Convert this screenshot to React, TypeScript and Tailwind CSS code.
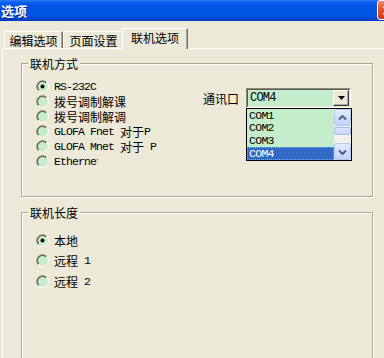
import React from "react";

const CJK = /([\u3400-\u9fff\uff00-\uffef]+)/;

function Mixed({ text }: { text: string }) {
  const parts = text.split(CJK).filter((p) => p.length > 0);
  return (
    <>
      {parts.map((p, i) =>
        CJK.test(p) ? (
          <span key={i} className="inline-block align-top leading-[15px] font-['Noto_Sans_CJK_SC',sans-serif] text-[12px]">
            {p}
          </span>
        ) : (
          <span
            key={i}
            className="inline-block align-top leading-[15px] font-['Liberation_Mono','Noto_Sans_CJK_SC',monospace] text-[11.5px] tracking-[-0.9px] whitespace-pre"
          >
            {p}
          </span>
        )
      )}
    </>
  );
}

function Radio({ checked }: { checked?: boolean }) {
  return (
    <svg width="13" height="13" viewBox="0 0 13 13" className="shrink-0">
      <circle cx="6.5" cy="6.5" r="5.5" fill="#C4EDCB" />
      <path d="M2.26 10.74 A6 6 0 0 1 10.74 2.26" fill="none" stroke="#8A8878" strokeWidth="1" />
      <path d="M10.74 2.26 A6 6 0 0 1 2.26 10.74" fill="none" stroke="#FFFFFF" strokeWidth="1" />
      <path d="M2.96 10.04 A5 5 0 0 1 10.04 2.96" fill="none" stroke="#4A4A40" strokeWidth="1" />
      <path d="M10.04 2.96 A5 5 0 0 1 2.96 10.04" fill="none" stroke="#E6E3D4" strokeWidth="1" />
      {checked && <circle cx="6.5" cy="6.5" r="2" fill="#000" />}
    </svg>
  );
}

function RadioRow({ label, checked, h, clip }: { label: string; checked?: boolean; h: string; clip?: boolean }) {
  return (
    <div className={`flex items-center gap-[5px] ${h}`}>
      <Radio checked={checked} />
      {clip ? (
        <div className="w-[44px] h-[15px] overflow-hidden whitespace-nowrap leading-[15px] text-black">
          <Mixed text={label} />
        </div>
      ) : (
        <div className="h-[15px] whitespace-nowrap leading-[15px] text-black">
          <Mixed text={label} />
        </div>
      )}
    </div>
  );
}

function GroupBox({ title, className, children }: { title: string; className: string; children?: React.ReactNode }) {
  return (
    <div
      className={`relative w-[352px] border border-[#ACA899] shadow-[1px_1px_0_#ffffff,inset_1px_1px_0_#ffffff] ${className}`}
    >
      <div className="absolute -top-[8px] left-[6px] px-[2px] h-[15px] bg-[#ECE9D8] leading-[15px] text-black font-['Noto_Sans_CJK_SC',sans-serif] text-[12px]">
        {title}
      </div>
      {children}
    </div>
  );
}

function Chevron({ up }: { up?: boolean }) {
  return (
    <svg width="9" height="6" viewBox="0 0 9 6">
      <path
        d={up ? "M1 4.5 L4.5 1 L8 4.5" : "M1 1.5 L4.5 5 L8 1.5"}
        fill="none"
        stroke="#4D6185"
        strokeWidth="2"
      />
    </svg>
  );
}

export default function App() {
  return (
    <div className="w-[384px] h-[358px] overflow-hidden bg-[#ECE9D8] flex flex-col select-none">
      {/* Title bar */}
      <div className="h-[21px] shrink-0 flex items-center overflow-hidden bg-[linear-gradient(to_bottom,#2E7CF8_0%,#0A5EEE_12%,#0055E5_30%,#0053E2_75%,#0049D6_88%,#0036B8_100%)]">
        <div className="pl-[1px] text-white font-bold text-[13px] leading-[16px] font-['Noto_Sans_CJK_SC',sans-serif] [text-shadow:1px_1px_0_#0A2A8A]">
          选项
        </div>
        <div className="ml-auto mr-[-14px] w-[21px] h-[20px] mt-[-1px] rounded-[3px] border border-white bg-[linear-gradient(to_bottom,#F08A68,#E0502A_50%,#C83C18)] flex items-center justify-center">
          <svg width="11" height="11" viewBox="0 0 11 11">
            <path d="M1.5 1.5 L9.5 9.5 M9.5 1.5 L1.5 9.5" stroke="#fff" strokeWidth="2" />
          </svg>
        </div>
      </div>

      {/* Tab strip */}
      <div className="h-[27px] shrink-0 flex items-end pl-[4px] font-['Noto_Sans_CJK_SC',sans-serif] text-[12px] text-black">
        <div className="w-[59px] h-[17px] border-l border-t border-white rounded-tl-[2px] border-r border-r-[#716F64] shadow-[inset_-1px_0_0_#ACA899] flex items-center justify-center pt-[1px] leading-[15px]">
          编辑选项
        </div>
        <div className="w-[61px] h-[17px] border-l border-t border-white rounded-tl-[2px] border-r border-r-[#716F64] shadow-[inset_-1px_0_0_#ACA899] flex items-center justify-center pt-[1px] leading-[15px]">
          页面设置
        </div>
        <div className="relative z-10 ml-[-2px] mb-[-1px] w-[66px] h-[21px] bg-[#ECE9D8] border-l border-t border-white rounded-tl-[2px] border-r border-r-[#716F64] shadow-[inset_-1px_0_0_#ACA899] flex items-start justify-center pt-[1px] leading-[15px]">
          联机选项
        </div>
      </div>

      {/* Panel */}
      <div className="flex-1 ml-[2px] border-l border-t border-white pl-[18px] pt-[14px]">
        <GroupBox title="联机方式" className="h-[134px]">
          <div className="flex pt-[15px]">
            <div className="w-[181px] pl-[14px] flex flex-col">
              <RadioRow h="h-[15px]" label="RS-232C" checked />
              <RadioRow h="h-[15px]" label="拨号调制解课" />
              <RadioRow h="h-[15px]" label="拨号调制解调" />
              <RadioRow h="h-[15px]" label="GLOFA Fnet 对于P" />
              <RadioRow h="h-[15px]" label="GLOFA Mnet 对于 P" />
              <RadioRow h="h-[15px]" label="Ethernet" clip />
            </div>
            <div className="mt-[9px] flex items-center gap-[7px] h-[20px]">
              <div className="font-['Noto_Sans_CJK_SC',sans-serif] text-[12px] leading-[15px] text-black">通讯口</div>
              <div className="relative w-[105px] h-[20px] border border-t-[#8C8A7C] border-l-[#8C8A7C] border-b-white border-r-white">
                <div className="h-full border border-t-[#5A594E] border-l-[#5A594E] border-b-[#E4E1D2] border-r-[#E4E1D2] bg-[#C4EDCB] flex items-center">
                  <div className="pl-[2px] flex-1 font-['Liberation_Mono',monospace] text-[12px] tracking-[-0.8px] leading-[14px] text-black">
                    COM4
                  </div>
                  <div className="w-[16px] h-[16px] bg-[#ECE9D8] border border-t-white border-l-white border-b-[#404040] border-r-[#404040] shadow-[inset_-1px_-1px_0_#ACA899] flex items-center justify-center">
                    <svg width="7" height="4" viewBox="0 0 7 4">
                      <path d="M0 0 H7 L3.5 4 Z" fill="#000" />
                    </svg>
                  </div>
                </div>

                {/* Dropdown list */}
                <div className="absolute left-[-1px] top-[19px] w-[106px] h-[53px] border border-black bg-[#C4EDCB] flex">
                  <div className="flex-1 flex flex-col font-['Liberation_Mono',monospace] text-[11.5px] tracking-[-0.7px] text-black">
                    <div className="h-[12.75px] flex items-center pl-[2px] leading-none">COM1</div>
                    <div className="h-[12.75px] flex items-center pl-[2px] leading-none">COM2</div>
                    <div className="h-[12.75px] flex items-center pl-[2px] leading-none">COM3</div>
                    <div className="h-[12.75px] flex items-center pl-[1px] leading-none bg-[#316AC5] text-white border border-dotted border-[#E8A040]">
                      COM4
                    </div>
                  </div>
                  <div className="w-[17px] flex flex-col bg-[#F3F1EC]">
                    <div className="h-[17px] rounded-[2px] border border-[#B7C9F2] bg-[linear-gradient(to_bottom,#E2EAFE,#C2D3FC)] flex items-center justify-center">
                      <Chevron up />
                    </div>
                    <div className="mt-[1px] h-[8px] rounded-[2px] border border-[#A8BCEB] bg-[linear-gradient(to_bottom,#DCE6FE,#C6D6FC)]" />
                    <div className="flex-1" />
                    <div className="h-[17px] rounded-[2px] border border-[#B7C9F2] bg-[linear-gradient(to_bottom,#E2EAFE,#C2D3FC)] flex items-center justify-center">
                      <Chevron />
                    </div>
                  </div>
                </div>
              </div>
            </div>
          </div>
        </GroupBox>

        <GroupBox title="联机长度" className="mt-[15px] h-[170px]">
          <div className="pl-[14px] pt-[17px] flex flex-col">
            <RadioRow h="h-[20px]" label="本地" checked />
            <RadioRow h="h-[21px]" label="远程 1" />
            <RadioRow h="h-[20px]" label="远程 2" />
          </div>
        </GroupBox>
      </div>
    </div>
  );
}
